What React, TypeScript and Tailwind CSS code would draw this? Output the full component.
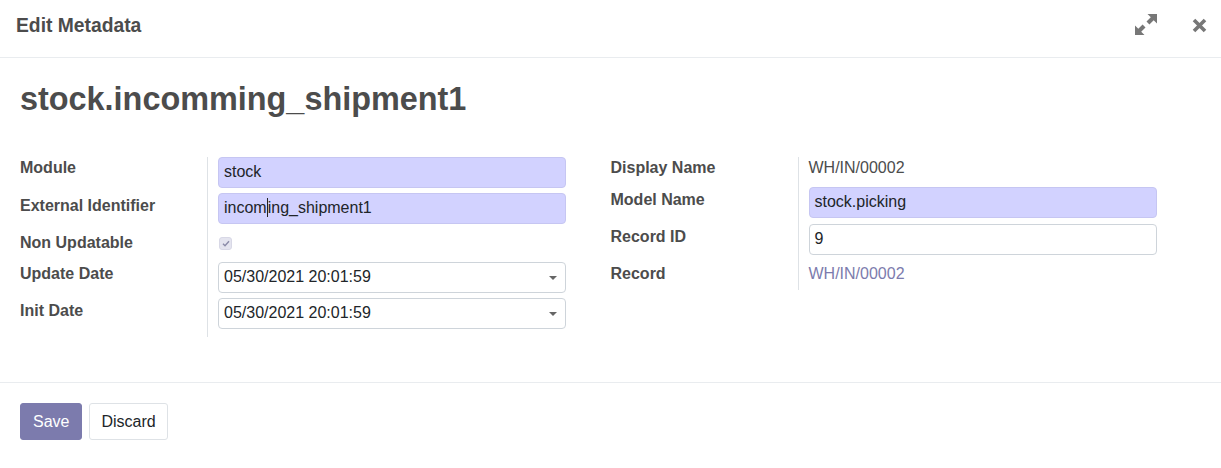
import React from "react";

const labelCls = "w-[187px] shrink-0 text-[16px] font-bold leading-5";
const cellCls = "flex-1 border-l border-[#dee2e6] pl-[10px]";
const inputCls =
  "w-[348px] h-[31px] rounded-[4px] border px-[5px] text-[16px] leading-[28px] text-[#212529]";

function Caret() {
  return (
    <span className="absolute right-[8px] top-[13px] h-0 w-0 border-x-[4px] border-t-[4px] border-x-transparent border-t-[#666]" />
  );
}

function Row({
  label,
  labelPad,
  cellPad,
  children,
}: {
  label: string;
  labelPad: string;
  cellPad: string;
  children: React.ReactNode;
}) {
  return (
    <div className="flex">
      <div className={`${labelCls} ${labelPad}`}>{label}</div>
      <div className={`${cellCls} ${cellPad}`}>{children}</div>
    </div>
  );
}

export default function App() {
  return (
    <div className="w-[1221px] h-[468px] bg-white text-[#4c4c4c] font-['Liberation_Sans',Arial,sans-serif] flex flex-col">
      {/* header */}
      <div className="h-[58px] border-b border-[#e9ecef] pl-4 pr-[14px] pt-[14px] flex items-start justify-between">
        <h4 className="text-[19.3px] font-bold leading-6">Edit Metadata</h4>
        <div className="flex items-start gap-[35px]">
          <svg width="22" height="21" viewBox="0 0 22 21">
            <g fill="#777">
              <path d="M12.5 0h9.5v9.5l-3.3-3.3-4.3 4.3-2.9-2.9 4.3-4.3z" />
              <path d="M0 21v-9.5l3.3 3.3 4.3-4.3 2.9 2.9-4.3 4.3 3.3 3.3z" />
            </g>
          </svg>
          <svg width="15" height="15" viewBox="0 0 15 15" className="mt-[4px]">
            <path d="M2 2l11 11M13 2L2 13" stroke="#777" strokeWidth="3.6" />
          </svg>
        </div>
      </div>

      {/* body */}
      <div className="px-5 pt-[22px] pb-[45px]">
        <h1 className="text-[32.4px] font-bold leading-[38px] text-[#4c4c4c]">
          stock.incomming_shipment1
        </h1>
        <div className="grid grid-cols-2 mt-[39px]">
          {/* left group */}
          <div className="flex flex-col">
            <Row label="Module" labelPad="pt-[1px]" cellPad="pb-[5px]">
              <div className={`${inputCls} bg-[#d2d2ff] border-[#c6c6f2]`}>stock</div>
            </Row>
            <Row label="External Identifier" labelPad="pt-[3px]" cellPad="pb-[5px]">
              <div className={`${inputCls} bg-[#d2d2ff] border-[#c6c6f2]`}>
                incom
                <span className="inline-block w-px h-[19px] bg-[#222] align-[-4px]" />
                ing_shipment1
              </div>
            </Row>
            <Row label="Non Updatable" labelPad="pt-[4px]" cellPad="pt-[8px] h-[33px]">
              <div className="ml-[1px] w-[13px] h-[13px] rounded-[3px] bg-[#e4e4ef] border border-[#d8d8e6] flex items-center justify-center">
                <svg width="8" height="7" viewBox="0 0 8 7">
                  <path d="M1 3.8l2 2 4-4.6" fill="none" stroke="#8a8aa8" strokeWidth="1.4" />
                </svg>
              </div>
            </Row>
            <Row label="Update Date" labelPad="pt-[2px]" cellPad="pb-[5px]">
              <div className={`${inputCls} relative bg-white border-[#ced4da]`}>
                05/30/2021 20:01:59
                <Caret />
              </div>
            </Row>
            <Row label="Init Date" labelPad="pt-[3px]" cellPad="pb-[8px]">
              <div className={`${inputCls} relative bg-white border-[#ced4da]`}>
                05/30/2021 20:01:59
                <Caret />
              </div>
            </Row>
          </div>

          {/* right group */}
          <div className="flex flex-col">
            <Row label="Display Name" labelPad="pt-[1px]" cellPad="pt-[1px] h-[27px]">
              <div className="text-[16px] leading-5">WH/IN/00002</div>
            </Row>
            <Row label="Model Name" labelPad="pt-[6px]" cellPad="pt-[3px] pb-[3px]">
              <div className={`${inputCls} bg-[#d2d2ff] border-[#c6c6f2]`}>stock.picking</div>
            </Row>
            <Row label="Record ID" labelPad="pt-[6px]" cellPad="pt-[3px] pb-[2px]">
              <div className={`${inputCls} bg-white border-[#ced4da]`}>9</div>
            </Row>
            <Row label="Record" labelPad="pt-[7px]" cellPad="pt-[7px] h-[33px]">
              <div className="text-[16px] leading-5 text-[#7c7bad]">WH/IN/00002</div>
            </Row>
          </div>
        </div>
      </div>

      {/* footer */}
      <div className="border-t border-[#e9ecef] px-5 pt-5 flex gap-[7px]">
        <button className="h-[37px] px-[12px] rounded-[3px] border border-[#7c7bad] bg-[#7c7bad] text-white text-[16px] leading-6">
          Save
        </button>
        <button className="h-[37px] px-[11px] rounded-[3px] border border-[#dee2e6] bg-white text-[#212529] text-[16px] leading-6">
          Discard
        </button>
      </div>
    </div>
  );
}
